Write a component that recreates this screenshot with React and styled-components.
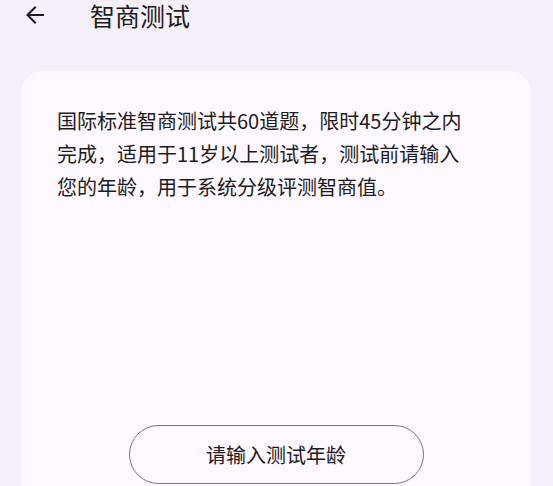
import styled, { createGlobalStyle } from 'styled-components';

const GlobalStyle = createGlobalStyle`
    html, body {
        margin: 0;
        padding: 0;
        background: #f4eff9;
        overflow: hidden;
    }
    body {
        font-family: "Noto Sans CJK SC", "Noto Sans", Roboto, sans-serif;
        color: #1d1b20;
    }
`;

const Page = styled.div`
    width: 553px;
    height: 486px;
    overflow: hidden;
`;

const TopBar = styled.div`
    display: flex;
    align-items: center;
    height: 30px;
    padding-left: 21px;
`;

const BackButton = styled.button`
    display: flex;
    align-items: center;
    justify-content: center;
    width: 28px;
    height: 28px;
    padding: 0;
    border: none;
    background: transparent;
    color: #1d1b20;
`;

const Title = styled.h1`
    margin: 0 0 0 41px;
    font-size: 25px;
    font-weight: 400;
    line-height: 30px;
`;

const Card = styled.div`
    margin: 41px 23px 0 22px;
    height: 460px;
    background: #fdf7ff;
    border-radius: 20px;
    padding: 33px 35px 0;
    display: flex;
    flex-direction: column;
    align-items: center;
`;

const Intro = styled.p`
    margin: 0;
    align-self: flex-start;
    max-width: 412px;
    font-size: 20px;
    line-height: 33px;
`;

const AgeButton = styled.button`
    margin-top: 222px;
    width: 295px;
    height: 59px;
    border: 1px solid #79747e;
    border-radius: 30px;
    background: transparent;
    font-family: inherit;
    font-size: 20px;
    color: #1d1b20;
    cursor: pointer;
`;

const App = () => {
    return (
        <Page>
            <GlobalStyle />
            <TopBar>
                <BackButton aria-label="back">
                    <svg width="24" height="24" viewBox="0 0 24 24" fill="none" stroke="currentColor" strokeWidth="2" strokeLinecap="square">
                        <path d="M20 12H5" />
                        <path d="M12 4.5L4.5 12L12 19.5" />
                    </svg>
                </BackButton>
                <Title>智商测试</Title>
            </TopBar>
            <Card>
                <Intro>
                    国际标准智商测试共60道题，限时45分钟之内完成，适用于11岁以上测试者，测试前请输入您的年龄，用于系统分级评测智商值。
                </Intro>
                <AgeButton>请输入测试年龄</AgeButton>
            </Card>
        </Page>
    );
};

export default App;
